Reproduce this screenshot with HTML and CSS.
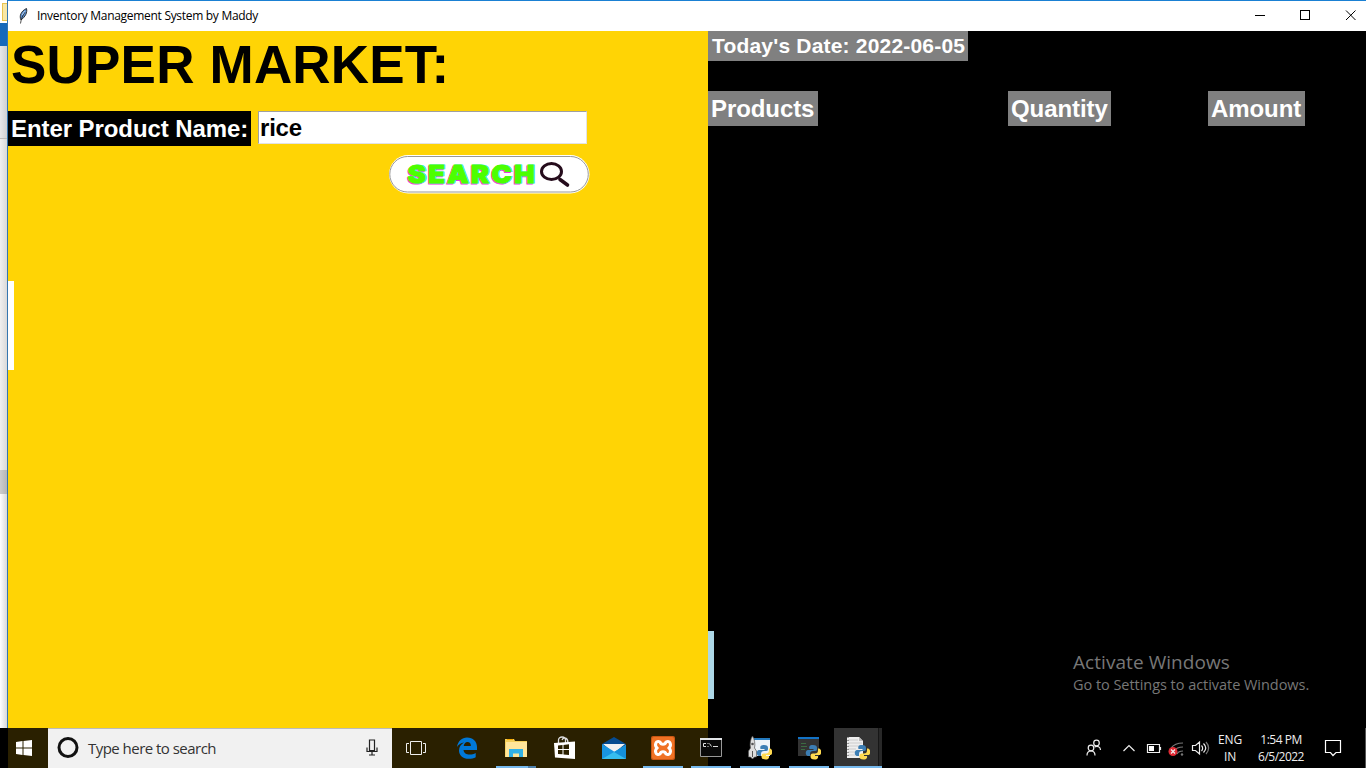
FILE: index.html
```html
<!DOCTYPE html>
<html lang="en">
<head>
<meta charset="utf-8">
<title>Inventory Management System by Maddy</title>
<link rel="stylesheet" href="styles.css">
</head>
<body>
<main class="desktop">
  <aside class="behind"><i class="folder"></i><i class="ribbon"></i><i class="tools"></i><i class="pane"></i><i class="thumb"></i><i class="rest"></i></aside>
  <section class="window">
    <header class="titlebar">
      <svg class="feather" width="12" height="18" viewBox="0 0 12 18"><path d="M3 13C1 9 3 4 8.500 1.500c1 4-1 8-5.500 11.500z" fill="#5b8fd0" stroke="#222" stroke-width=".9"/><path d="M2.500 16.500C3 12 5 8 7 5" fill="none" stroke="#222" stroke-width=".8"/><path d="M4 8l3-4" stroke="#b9d4f3"/></svg>
      <span class="caption">Inventory Management System by Maddy</span>
      <svg class="controls" width="112" height="30" viewBox="0 0 112 30" fill="none" stroke="#000" shape-rendering="crispEdges"><path d="M1 14.500h10M46.500 9.500h9v9h-9z"/><path d="M92 9.500l9.500 9.500M101.500 9.500L92 19" shape-rendering="auto"/></svg>
    </header>
    <div class="panels">
      <section class="lookup">
        <h1>SUPER MARKET:</h1>
        <div class="field"><label class="tag dark" for="product">Enter Product Name:</label><input id="product" value="rice"></div>
        <button class="search">
          <svg width="202" height="40" viewBox="0 0 202 40">
            <rect x="1" y="1" width="200.500" height="38.500" rx="19.250" fill="#fff"/>
            <rect x="1.800" y="2.500" width="198.500" height="35.500" rx="17.750" fill="#fff" stroke="#999"/>
            <g class="logo"><text x="18.800" y="29.800" textLength="129" lengthAdjust="spacingAndGlyphs" fill="#e63bdd" stroke="#e63bdd">SEARCH</text><text x="20.400" y="28.500" textLength="129" lengthAdjust="spacingAndGlyphs" fill="#38e5e8" stroke="#38e5e8">SEARCH</text><text x="19.600" y="29.200" textLength="129" lengthAdjust="spacingAndGlyphs" fill="#4cff00" stroke="#4cff00">SEARCH</text></g>
            <ellipse cx="163.500" cy="17.500" rx="10" ry="8" fill="none" stroke="#250c1c" stroke-width="3"/><path d="M172 25.500l7.500 5.500" stroke="#250c1c" stroke-width="3.600" stroke-linecap="round"/>
          </svg>
        </button>
        <div class="result"></div>
      </section>
      <section class="cart">
        <div class="tag date">Today's Date: 2022-06-05</div>
        <div class="columns"><span class="tag products">Products</span><span class="tag quantity">Quantity</span><span class="tag amount">Amount</span></div>
        <div class="total"></div>
      </section>
    </div>
  </section>
  <div class="watermark"><p class="activate">Activate Windows</p><p class="settings">Go to Settings to activate Windows.</p></div>
</main>
<footer class="taskbar">
  <div class="start"><svg width="16" height="16" viewBox="0 0 16 16" fill="#fff"><path d="M0 2l6.500-1v6.500H0zM7.500 1L16 0v7.500H7.500zM0 8.500h6.500V15L0 14zM7.500 8.500H16V16l-8.500-1z"/></svg></div>
  <div class="find"><svg width="22" height="22" viewBox="0 0 22 22"><circle cx="11" cy="10.500" r="9" fill="none" stroke="#111" stroke-width="3"/></svg><span class="hint">Type here to search</span><svg class="mic" width="12" height="18" viewBox="0 0 12 18" fill="none" stroke="#222" stroke-width="1.200"><path d="M3.500 1h5v10.500h-5zM1 8.500v4h10v-4M6 12.500V16M3 16h6"/></svg></div>
  <nav class="apps">
    <div class="app tasks"><svg width="24" height="24" viewBox="0 0 24 24" fill="none" stroke="#eee"><path d="M6.500 5.500h11v13h-11zM5 7.500H2.500v9H5M19 7.500h2.500v9H19"/></svg></div>
    <div class="app edge"><svg width="24" height="24" viewBox="0 0 24 24"><path fill="#0078d7" d="M2 11C3 5 7 1.500 12 1.500c6 0 10 4 10 9.500v3H8.500c.2 3 3 4.600 6 4.600 2.400 0 4.400-.6 6.200-1.700v4.400c-2 1-4.300 1.500-6.900 1.500-6 0-9.800-3.400-9.800-8.300C4 11 6 8 9 6.500 6 7 3.500 8.500 2 11zm6.700-1h7.200c0-2.400-1.200-4-3.500-4-2 0-3.400 1.700-3.700 4z"/></svg></div>
    <div class="app files run"><svg width="24" height="24" viewBox="0 0 24 24"><path d="M1 3h9l1 2h12v16H1z" fill="#f5cf59"/><path d="M2 6h21v15H1.500z" fill="#ffe69b"/><path d="M3 3h6v1H3z" fill="#f6a900"/><path d="M5 21v-8h14v8h-4v-3.500H9V21z" fill="#31b2e7"/></svg></div>
    <div class="app store"><svg width="24" height="24" viewBox="0 0 24 24"><path d="M5.500 8V4c0-4 7-4 7 0v3M9 4c2-4 6-2 6 3" fill="none" stroke="#ddd" stroke-width="1.300"/><path d="M1 7l21-1.500V23L2 21.500z" fill="#fff"/><path d="M5 9.500l4.500-.5v4H5zM10.500 9l5.500-.7V13h-5.500zM5 14h4.500v4.300L5 18zM10.500 14H16v5l-5.500-.6z" fill="#2a2000"/></svg></div>
    <div class="app mail"><svg width="24" height="24" viewBox="0 0 24 24"><path d="M0 8L12 1l12 7v5H0z" fill="#064c91"/><path d="M1 8h22L12 17z" fill="#f2f2f2"/><path d="M0 8l24 15H0z" fill="#1995e1"/><path d="M24 9v14H0z" fill="#36bdef"/><path d="M24 9v14L12 16z" fill="#148fda"/></svg></div>
    <div class="app xampp run"><svg width="24" height="24" viewBox="0 0 24 24"><rect width="24" height="24" rx="2" fill="#c95713"/><rect x="1" y="1" width="22" height="22" rx="2" fill="#f07224"/><path d="M9 6C5 4 3 9 6 12c-3 3-1 8 3 6 1-3 5-3 6 0 4 2 6-3 3-6 3-3 1-8-3-6-1 3-5 3-6 0z" fill="none" stroke="#fff" stroke-width="3"/></svg></div>
    <div class="app cmd run"><svg width="24" height="24" viewBox="0 0 24 24"><path d="M1.500 3.500h21v17h-21z" fill="#090909" stroke="#999"/><path d="M1 2h22v2H1z" fill="#e1e4e7"/><path d="M7 7.500H4.500v3H7M9 7v1M9 10v1M10.500 7.500l2 3M14 10.500h5" fill="none" stroke="#ddd"/></svg></div>
    <div class="app idle run"><svg width="24" height="24" viewBox="0 0 24 24"><path d="M5 3h17v17H5z" fill="#edf3f8"/><path d="M5 2h17v2H5z" fill="#2379be"/><path d="M4.500 0c2 3 3 8 2 12l2 3v6H6.500l-2 2-2-2H.5v-6l2-3c-1-4 0-9 2-12z" fill="#ddd" stroke="#555" stroke-width=".7"/><path d="M4.500 15v6" stroke="#555"/><circle cx="4.500" cy="8" r="1.300" fill="#555"/><use href="#snake"/></svg></div>
    <div class="app pycon run"><svg width="24" height="24" viewBox="0 0 24 24"><path d="M1 2h21v18H1z" fill="#333"/><path d="M1 1h21v2H1z" fill="#1373c6"/><path d="M4 7.500h5M4 10.500h6M4 13.500h4" stroke="#3c6b42"/><use href="#snake"/></svg></div>
    <div class="app pyfile run active"><svg width="24" height="24" viewBox="0 0 24 24"><path d="M1 1h12l4 4v17H1z" fill="#eee"/><path d="M2 4h10M2 7h14M2 10h14M2 13h8M2 16h7M2 19h7" stroke="#ccc"/><path d="M2 1v21" stroke="#444" stroke-dasharray="1 2"/><path d="M13 1v4h4" fill="#bbb"/><use href="#snake"/></svg></div>
  </nav>
  <div class="tray">
    <svg class="status" width="128" height="40" viewBox="0 0 128 40" fill="none" stroke="#eee" stroke-width="1.200">
      <circle cx="6" cy="20" r="2.800"/><path d="M2 27.500c0-6 8-6 8 0"/><circle cx="11.500" cy="15" r="2.800"/><path d="M9.500 19c3-1.500 6 0 6 3"/>
      <path d="M38.500 23l5.500-5.500 5.500 5.500"/><path d="M62.500 16.500h12v8h-12zM75.500 19v3"/><path d="M64 18h5v5h-5z" fill="#fff" stroke="none"/>
      <g stroke="#777"><path d="M86 20c3-4 6-5 12-5M89 23c2-3 5-4 9-4M92 26c1-2 3-3 6-3"/></g><circle cx="97" cy="26.500" r="1.200" fill="#777" stroke="none"/><circle cx="88" cy="23.500" r="4.500" fill="#e02b35" stroke="none"/><path d="M86 21.500l4 4M90 21.500l-4 4"/>
      <path d="M107.500 17.500h3l4-3.500v12l-4-3.500h-3zM116.500 17.500c1.500 1.500 1.500 4 0 5.500M118.500 15.500c3 3 3 6 0 9"/><path d="M121 14c3.500 4 3.500 8 0 12" stroke="#777"/>
    </svg>
    <div class="lang"><span>ENG</span><span>IN</span></div>
    <div class="clock"><span class="time">1:54 PM</span><span class="day">6/5/2022</span></div>
    <svg class="notice" width="18" height="18" viewBox="0 0 18 18" fill="none" stroke="#fff" stroke-width="1.200"><path d="M1.500 1.500h15v12H12L9 16.500l-2.500-3h-5z"/></svg>
  </div>
</footer>
<svg class="defs" width="0" height="0"><defs><g id="snake"><path d="M16 9c-4 0-4 2-3.500 4h4v1H11c-3 0-3 6 0 6h2v-2c0-2 1-3 3-3h2c2 0 2-1 2-3s-1-3-4-3z" fill="#3c7eb4"/><path d="M21 12.500v2c0 2-1 3-3 3h-2c-2 0-2.500 1-2.500 3s1 3 4 3 4-1.500 3.500-3.500h-3v-1h4c3 0 3-6 0-6.500z" fill="#ffda50"/></g></defs></svg>
</body>
</html>
```
FILE: styles.css
```css
* { box-sizing: border-box; }
body { margin: 0; width: 1366px; height: 768px; overflow: hidden; background: #000; font-family: "Open Sans", "Noto Sans", sans-serif; }
p, h1 { margin: 0; }
svg { display: block; flex: none; }
.desktop { display: flex; height: 728px; position: relative; }
.behind { width: 7px; display: flex; flex-direction: column; background: #eee; }
.behind i { background: linear-gradient(90deg, #f0f0f0, #d9d9d9); }
.behind .folder { height: 23px; background: #fff; border-left: 2px solid #fff; }
.behind .folder::after { content: ""; display: block; height: 16px; margin-top: 3px; background: #f8e7a5; border: 1px solid #e8c34e; border-right: 0; }
.behind .ribbon { height: 23px; background: #1769ba; }
.behind .tools { height: 93px; background: linear-gradient(90deg, #e7e8ea, #cfd0d2); border-bottom: 1px solid #bbb; }
.behind .pane { height: 331px; }
.behind .thumb { height: 24px; background: linear-gradient(90deg, #cdcdcd, #b5b5b5); }
.behind .rest { flex: 1; background: linear-gradient(90deg, #fff, #d9d9d9); }
.window { flex: 1; display: flex; flex-direction: column; border-top: 1px solid #1a80d3; border-left: 1px solid #3476b0; }
.titlebar { height: 30px; display: flex; align-items: center; background: #fff; }
.feather { margin-left: 10px; }
.caption { width: 230px; margin-left: 7px; font-size: 12px; line-height: 20px; letter-spacing: -.3px; white-space: nowrap; }
.controls { margin-left: auto; }
.panels { flex: 1; display: flex; font-family: "Liberation Sans", Arial, sans-serif; }
.lookup { width: 700px; background: #ffd405; }
.lookup h1 { height: 80px; padding: 1px 0 0 3px; font-size: 53px; line-height: 65px; letter-spacing: .2px; white-space: nowrap; }
.field { display: flex; gap: 7px; height: 35px; }
.tag { height: 35px; padding-left: 3px; line-height: 36px; font-size: 24px; font-weight: bold; letter-spacing: -.08px; color: #fff; background: #808080; white-space: nowrap; }
.dark { width: 243px; background: #000; }
.field input { width: 329px; height: 33px; padding: 0 0 0 1px; border: 1px solid; border-color: #a0a0a0 #e3e3e3 #e3e3e3 #a0a0a0; outline: 0; background: #fff; font: bold 24px "Liberation Sans", Arial, sans-serif; letter-spacing: -.2px; color: #000; }
.search { display: block; margin: 8px 0 0 380px; padding: 0; border: 0; background: none; }
.logo { font: 900 24px Inter, sans-serif; letter-spacing: 1.800px; stroke-width: .9px; stroke-linejoin: miter; }
.result { width: 6px; height: 89px; margin-top: 87px; background: #fff; }
.cart { flex: 1; background: #000; }
.date { width: 260px; height: 30px; padding-left: 4px; font-size: 21px; line-height: 30px; letter-spacing: .19px; }
.columns { display: flex; margin-top: 30px; }
.products { width: 110px; }
.quantity { width: 103px; margin-left: 190px; }
.amount { width: 97px; margin-left: 97px; }
.total { width: 6px; height: 68px; margin-top: 505px; background: #add8e6; }
.watermark { position: absolute; left: 1073px; top: 650px; color: #777; white-space: nowrap; }
.activate { font-size: 19px; line-height: 25px; letter-spacing: .06px; }
.settings { font-size: 14.500px; line-height: 20px; letter-spacing: -.04px; }
.taskbar { display: flex; height: 40px; padding-left: 8px; background: #000; color: #eee; }
.start { width: 40px; display: flex; align-items: center; justify-content: center; padding-right: 8px; background: #2a2000; }
.find { width: 344px; display: flex; align-items: center; padding: 0 14px 1px 9px; border-top: 1px solid #bbb; background: #f1f1f1; }
.hint { margin-left: 9px; color: #333; font-size: 15px; letter-spacing: -.53px; white-space: nowrap; }
.mic { margin-left: auto; }
.apps { width: 491px; display: flex; background: linear-gradient(90deg, #2a2000 316px, #000 316px); }
.app { width: 40px; height: 40px; margin-right: 9px; display: flex; align-items: center; justify-content: center; flex: none; }
.tasks { margin-left: 4px; margin-right: 11px; }
.run { border-bottom: 2px solid #76b9ed; padding-top: 2px; }
.files { border-image: linear-gradient(90deg, #76b9ed 31px, #4f82ad 31px) 2; border-width: 0 0 2px; border-style: solid; }
.pycon { margin-right: 5px; }
.active { width: 48px; margin-right: 0; padding-right: 1px; background: linear-gradient(90deg, #333 44px, #171717 44px, #171717 45px, #282828 45px); }
.tray { flex: 1; display: flex; padding-left: 202px; border-right: 1px solid #555; font-size: 12px; }
.lang, .clock { display: flex; flex-direction: column; align-items: center; padding-top: 3px; line-height: 17px; white-space: nowrap; }
.lang { width: 34px; letter-spacing: -.2px; }
.clock { width: 50px; margin-left: 9px; letter-spacing: -.5px; }
.cmd { margin-left: -1px; }
.notice { margin: 11px 0 0 18px; }
.defs { position: absolute; }
```
